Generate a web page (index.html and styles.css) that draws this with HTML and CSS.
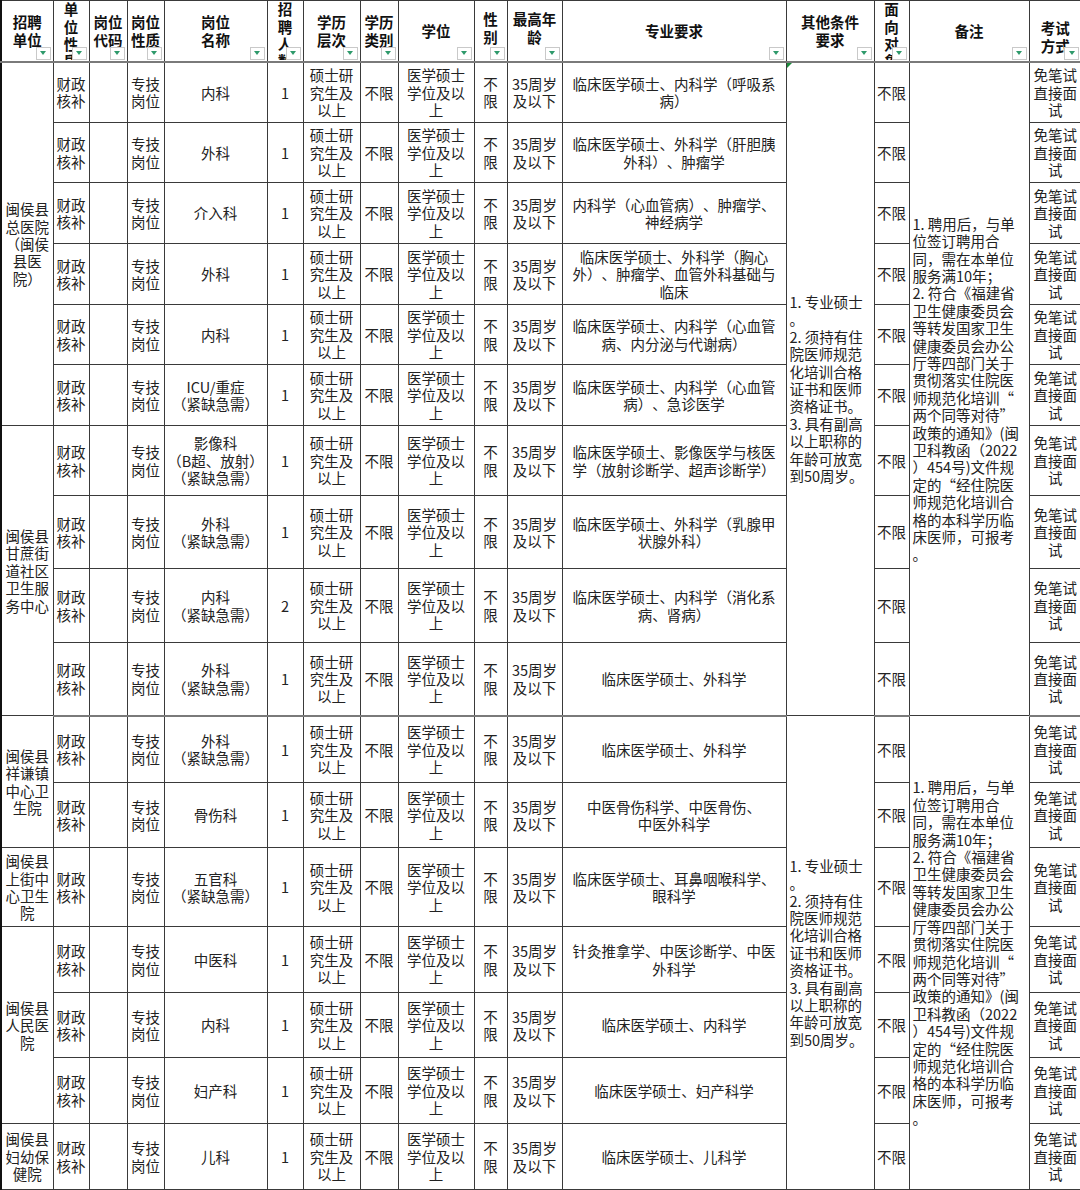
FILE: index.html
```html
<!DOCTYPE html>
<html lang="zh-CN">
<head>
<meta charset="utf-8">
<title>岗位信息表</title>
<link rel="stylesheet" href="styles.css">
</head>
<body>
<table class="sheet">
  <colgroup>
    <col class="w52"><col class="w36"><col class="w38"><col class="w37"><col class="w103"><col class="w36"><col class="w57"><col class="w38"><col class="w76"><col class="w33"><col class="w55"><col class="w224"><col class="w88"><col class="w35"><col class="w120"><col class="w52">
  </colgroup>
  <thead>
    <tr class="h61">
      <th class="first"><div class="hd">招聘<br>单位</div><span class="dd"></span></th>
      <th><div class="hd top">单<br>位<br>性<br>质</div><span class="dd"></span></th>
      <th><div class="hd">岗位<br>代码</div><span class="dd"></span></th>
      <th><div class="hd">岗位<br>性质</div><span class="dd"></span></th>
      <th><div class="hd">岗位<br>名称</div><span class="dd"></span></th>
      <th><div class="hd top">招<br>聘<br>人<br>数</div><span class="dd"></span></th>
      <th><div class="hd">学历<br>层次</div><span class="dd"></span></th>
      <th><div class="hd">学历<br>类别</div><span class="dd"></span></th>
      <th><div class="hd">学位</div><span class="dd"></span></th>
      <th><div class="hd up">性<br>别</div><span class="dd"></span></th>
      <th><div class="hd up">最高年<br>龄</div><span class="dd"></span></th>
      <th><div class="hd">专业要求</div><span class="dd"></span></th>
      <th><div class="hd">其他条件<br>要求</div><span class="dd"></span></th>
      <th><div class="hd top">面<br>向<br>对<br>象</div><span class="dd"></span></th>
      <th><div class="hd">备注</div><span class="dd"></span></th>
      <th class="last"><div class="hd down">考试<br>方式</div><span class="dd"></span></th>
    </tr>
  </thead>
  <tbody>
    <tr class="h61">
      <td class="first" rowspan="6">闽侯县<br>总医院<br>（闽侯<br>县医<br>院）</td>
      <td>财政<br>核补</td><td></td><td>专技<br>岗位</td><td>内科</td><td>1</td><td>硕士研<br>究生及<br>以上</td><td>不限</td><td>医学硕士<br>学位及以<br>上</td><td>不<br>限</td><td>35周岁<br>及以下</td>
      <td>临床医学硕士、内科学（呼吸系<br>病）</td>
      <td class="note" rowspan="10"><span class="flag"></span>1. 专业硕士<br>。<br>2. 须持有住<br>院医师规范<br>化培训合格<br>证书和医师<br>资格证书。<br>3. 具有副高<br>以上职称的<br>年龄可放宽<br>到50周岁。</td>
      <td>不限</td>
      <td class="note" rowspan="10">1. 聘用后，与单<br>位签订聘用合<br>同，需在本单位<br>服务满10年；<br>2. 符合《福建省<br>卫生健康委员会<br>等转发国家卫生<br>健康委员会办公<br>厅等四部门关于<br>贯彻落实住院医<br>师规范化培训“<br>两个同等对待”<br>政策的通知》(闽<br>卫科教函（2022<br>）454号)文件规<br>定的“经住院医<br>师规范化培训合<br>格的本科学历临<br>床医师，可报考<br>。</td>
      <td class="last">免笔试<br>直接面<br>试</td>
    </tr>
    <tr class="h60">
      <td>财政<br>核补</td><td></td><td>专技<br>岗位</td><td>外科</td><td>1</td><td>硕士研<br>究生及<br>以上</td><td>不限</td><td>医学硕士<br>学位及以<br>上</td><td>不<br>限</td><td>35周岁<br>及以下</td>
      <td>临床医学硕士、外科学（肝胆胰<br>外科）、肿瘤学</td>
      <td>不限</td>
      <td class="last">免笔试<br>直接面<br>试</td>
    </tr>
    <tr class="h61">
      <td>财政<br>核补</td><td></td><td>专技<br>岗位</td><td>介入科</td><td>1</td><td>硕士研<br>究生及<br>以上</td><td>不限</td><td>医学硕士<br>学位及以<br>上</td><td>不<br>限</td><td>35周岁<br>及以下</td>
      <td>内科学（心血管病）、肿瘤学、<br>神经病学</td>
      <td>不限</td>
      <td class="last">免笔试<br>直接面<br>试</td>
    </tr>
    <tr class="h61">
      <td>财政<br>核补</td><td></td><td>专技<br>岗位</td><td>外科</td><td>1</td><td>硕士研<br>究生及<br>以上</td><td>不限</td><td>医学硕士<br>学位及以<br>上</td><td>不<br>限</td><td>35周岁<br>及以下</td>
      <td>临床医学硕士、外科学（胸心<br>外）、肿瘤学、血管外科基础与<br>临床</td>
      <td>不限</td>
      <td class="last">免笔试<br>直接面<br>试</td>
    </tr>
    <tr class="h60">
      <td>财政<br>核补</td><td></td><td>专技<br>岗位</td><td>内科</td><td>1</td><td>硕士研<br>究生及<br>以上</td><td>不限</td><td>医学硕士<br>学位及以<br>上</td><td>不<br>限</td><td>35周岁<br>及以下</td>
      <td>临床医学硕士、内科学（心血管<br>病、内分泌与代谢病）</td>
      <td>不限</td>
      <td class="last">免笔试<br>直接面<br>试</td>
    </tr>
    <tr class="h61">
      <td>财政<br>核补</td><td></td><td>专技<br>岗位</td><td>ICU/重症<br>（紧缺急需）</td><td>1</td><td>硕士研<br>究生及<br>以上</td><td>不限</td><td>医学硕士<br>学位及以<br>上</td><td>不<br>限</td><td>35周岁<br>及以下</td>
      <td>临床医学硕士、内科学（心血管<br>病）、急诊医学</td>
      <td>不限</td>
      <td class="last">免笔试<br>直接面<br>试</td>
    </tr>
    <tr class="h70">
      <td class="first" rowspan="4">闽侯县<br>甘蔗街<br>道社区<br>卫生服<br>务中心</td>
      <td>财政<br>核补</td><td></td><td>专技<br>岗位</td><td>影像科<br>（B超、放射）<br>（紧缺急需）</td><td>1</td><td>硕士研<br>究生及<br>以上</td><td>不限</td><td>医学硕士<br>学位及以<br>上</td><td>不<br>限</td><td>35周岁<br>及以下</td>
      <td>临床医学硕士、影像医学与核医<br>学（放射诊断学、超声诊断学）</td>
      <td>不限</td>
      <td class="last">免笔试<br>直接面<br>试</td>
    </tr>
    <tr class="h73">
      <td>财政<br>核补</td><td></td><td>专技<br>岗位</td><td>外科<br>（紧缺急需）</td><td>1</td><td>硕士研<br>究生及<br>以上</td><td>不限</td><td>医学硕士<br>学位及以<br>上</td><td>不<br>限</td><td>35周岁<br>及以下</td>
      <td>临床医学硕士、外科学（乳腺甲<br>状腺外科）</td>
      <td>不限</td>
      <td class="last">免笔试<br>直接面<br>试</td>
    </tr>
    <tr class="h74">
      <td>财政<br>核补</td><td></td><td>专技<br>岗位</td><td>内科<br>（紧缺急需）</td><td>2</td><td>硕士研<br>究生及<br>以上</td><td>不限</td><td>医学硕士<br>学位及以<br>上</td><td>不<br>限</td><td>35周岁<br>及以下</td>
      <td>临床医学硕士、内科学（消化系<br>病、肾病）</td>
      <td>不限</td>
      <td class="last">免笔试<br>直接面<br>试</td>
    </tr>
    <tr class="h73 sep">
      <td>财政<br>核补</td><td></td><td>专技<br>岗位</td><td>外科<br>（紧缺急需）</td><td>1</td><td>硕士研<br>究生及<br>以上</td><td>不限</td><td>医学硕士<br>学位及以<br>上</td><td>不<br>限</td><td>35周岁<br>及以下</td>
      <td>临床医学硕士、外科学</td>
      <td>不限</td>
      <td class="last">免笔试<br>直接面<br>试</td>
    </tr>
    <tr class="h67">
      <td class="first" rowspan="2">闽侯县<br>祥谦镇<br>中心卫<br>生院</td>
      <td>财政<br>核补</td><td></td><td>专技<br>岗位</td><td>外科<br>（紧缺急需）</td><td>1</td><td>硕士研<br>究生及<br>以上</td><td>不限</td><td>医学硕士<br>学位及以<br>上</td><td>不<br>限</td><td>35周岁<br>及以下</td>
      <td>临床医学硕士、外科学</td>
      <td class="note" rowspan="7">1. 专业硕士<br>。<br>2. 须持有住<br>院医师规范<br>化培训合格<br>证书和医师<br>资格证书。<br>3. 具有副高<br>以上职称的<br>年龄可放宽<br>到50周岁。</td>
      <td>不限</td>
      <td class="note" rowspan="7">1. 聘用后，与单<br>位签订聘用合<br>同，需在本单位<br>服务满10年；<br>2. 符合《福建省<br>卫生健康委员会<br>等转发国家卫生<br>健康委员会办公<br>厅等四部门关于<br>贯彻落实住院医<br>师规范化培训“<br>两个同等对待”<br>政策的通知》(闽<br>卫科教函（2022<br>）454号)文件规<br>定的“经住院医<br>师规范化培训合<br>格的本科学历临<br>床医师，可报考<br>。</td>
      <td class="last">免笔试<br>直接面<br>试</td>
    </tr>
    <tr class="h65">
      <td>财政<br>核补</td><td></td><td>专技<br>岗位</td><td>骨伤科</td><td>1</td><td>硕士研<br>究生及<br>以上</td><td>不限</td><td>医学硕士<br>学位及以<br>上</td><td>不<br>限</td><td>35周岁<br>及以下</td>
      <td>中医骨伤科学、中医骨伤、<br>中医外科学</td>
      <td>不限</td>
      <td class="last">免笔试<br>直接面<br>试</td>
    </tr>
    <tr class="h79">
      <td class="first">闽侯县<br>上街中<br>心卫生<br>院</td>
      <td>财政<br>核补</td><td></td><td>专技<br>岗位</td><td>五官科<br>（紧缺急需）</td><td>1</td><td>硕士研<br>究生及<br>以上</td><td>不限</td><td>医学硕士<br>学位及以<br>上</td><td>不<br>限</td><td>35周岁<br>及以下</td>
      <td>临床医学硕士、耳鼻咽喉科学、<br>眼科学</td>
      <td>不限</td>
      <td class="last">免笔试<br>直接面<br>试</td>
    </tr>
    <tr class="h66">
      <td class="first" rowspan="3">闽侯县<br>人民医<br>院</td>
      <td>财政<br>核补</td><td></td><td>专技<br>岗位</td><td>中医科</td><td>1</td><td>硕士研<br>究生及<br>以上</td><td>不限</td><td>医学硕士<br>学位及以<br>上</td><td>不<br>限</td><td>35周岁<br>及以下</td>
      <td>针灸推拿学、中医诊断学、中医<br>外科学</td>
      <td>不限</td>
      <td class="last">免笔试<br>直接面<br>试</td>
    </tr>
    <tr class="h65">
      <td>财政<br>核补</td><td></td><td>专技<br>岗位</td><td>内科</td><td>1</td><td>硕士研<br>究生及<br>以上</td><td>不限</td><td>医学硕士<br>学位及以<br>上</td><td>不<br>限</td><td>35周岁<br>及以下</td>
      <td>临床医学硕士、内科学</td>
      <td>不限</td>
      <td class="last">免笔试<br>直接面<br>试</td>
    </tr>
    <tr class="h66">
      <td>财政<br>核补</td><td></td><td>专技<br>岗位</td><td>妇产科</td><td>1</td><td>硕士研<br>究生及<br>以上</td><td>不限</td><td>医学硕士<br>学位及以<br>上</td><td>不<br>限</td><td>35周岁<br>及以下</td>
      <td>临床医学硕士、妇产科学</td>
      <td>不限</td>
      <td class="last">免笔试<br>直接面<br>试</td>
    </tr>
    <tr class="h66">
      <td class="first">闽侯县<br>妇幼保<br>健院</td>
      <td>财政<br>核补</td><td></td><td>专技<br>岗位</td><td>儿科</td><td>1</td><td>硕士研<br>究生及<br>以上</td><td>不限</td><td>医学硕士<br>学位及以<br>上</td><td>不<br>限</td><td>35周岁<br>及以下</td>
      <td>临床医学硕士、儿科学</td>
      <td>不限</td>
      <td class="last">免笔试<br>直接面<br>试</td>
    </tr>
  </tbody>
</table>
</body>
</html>
```

FILE: styles.css
```css
html, body {
  margin: 0;
  padding: 0;
  background: #ffffff;
}

body {
  font-family: "Noto Sans CJK SC", "Noto Sans", sans-serif;
}

.sheet {
  border-collapse: collapse;
  table-layout: fixed;
  width: 1080px;
  font-size: 14.5px;
  line-height: 17.4px;
  color: #222222;
  text-spacing-trim: space-all;
  font-feature-settings: "chws" 0, "halt" 0, "palt" 0;
}

.w52 { width: 52px; }
.w36 { width: 36px; }
.w38 { width: 38px; }
.w37 { width: 37px; }
.w103 { width: 103px; }
.w57 { width: 57px; }
.w76 { width: 76px; }
.w33 { width: 33px; }
.w55 { width: 55px; }
.w224 { width: 224px; }
.w88 { width: 88px; }
.w35 { width: 35px; }
.w120 { width: 120px; }

.sheet td,
.sheet th {
  border: 1px solid #3a3a3a;
  padding: 0 1px;
  text-align: center;
  vertical-align: middle;
  white-space: nowrap;
  overflow: hidden;
  font-weight: 400;
}

.sheet th {
  position: relative;
  padding: 0;
  font-weight: 700;
  color: #111111;
  border-bottom: 2px solid #7a7a7a;
}

.sheet .first {
  border-left: 2px solid #111111;
}

.sheet .last {
  border-right-style: hidden;
}

.h61 { height: 61px; }
.h60 { height: 60px; }
.h70 { height: 70px; }
.h73 { height: 73px; }
.h74 { height: 74px; }
.h67 { height: 67px; }
.h65 { height: 65px; }
.h79 { height: 79px; }
.h66 { height: 66px; }

.sep td {
  border-bottom: 2px solid #7a7a7a;
}

.hd {
  height: 59px;
  display: flex;
  align-items: center;
  justify-content: center;
  text-align: center;
  overflow: hidden;
  line-height: 17.4px;
}

.hd.top {
  align-items: flex-start;
  margin-top: -1px;
  height: 60px;
}

.hd.up {
  padding-bottom: 6px;
  height: 53px;
}

.hd.down {
  padding-top: 12px;
  height: 47px;
}

.dd {
  position: absolute;
  right: 2px;
  bottom: 1px;
  width: 13px;
  height: 11px;
  border: 1px solid #c9c9c9;
  background: #ffffff;
  display: flex;
  align-items: center;
  justify-content: center;
}

.dd::after {
  content: "";
  width: 0;
  height: 0;
  border-left: 3.5px solid transparent;
  border-right: 3.5px solid transparent;
  border-top: 4px solid #2e9a6b;
}

.sheet td.note {
  text-align: left;
  padding: 0 2px 0 3px;
  position: relative;
  overflow: visible;
}

.flag {
  position: absolute;
  top: 0;
  left: 0;
  width: 0;
  height: 0;
  border-top: 5px solid #1c8c3c;
  border-right: 5px solid transparent;
}
```
